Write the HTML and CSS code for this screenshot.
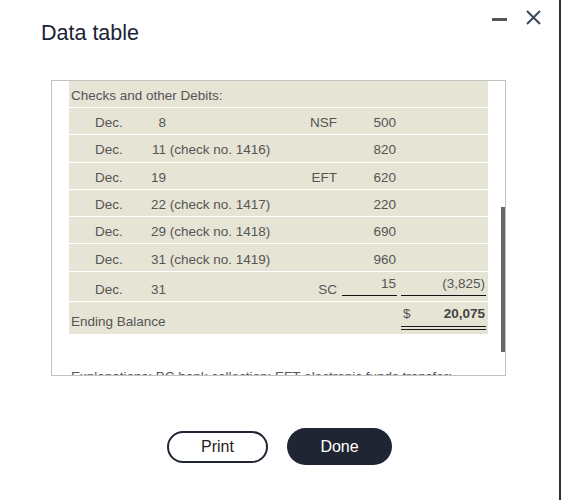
FILE: index.html
```html
<!DOCTYPE html>
<html lang="en">
<head>
<meta charset="utf-8">
<title>Data table</title>
<link rel="stylesheet" href="styles.css">
</head>
<body>
<div class="page">
  <div class="dialog">
    <div class="head">
      <h1 class="title">Data table</h1>
      <div class="win-icons">
        <svg class="ic-min" width="15" height="15" viewBox="0 0 15 15"><rect x="0" y="8" width="15" height="3" fill="#555"/></svg>
        <svg class="ic-close" width="15" height="15" viewBox="0 0 15 15"><path d="M1 1L14 14M14 1L1 14" stroke="#3b4858" stroke-width="2" fill="none"/></svg>
      </div>
    </div>
    <div class="box">
      <div class="scroll">
        <div class="ledger">
          <div class="row row-head"><span class="c-head">Checks and other Debits:</span></div>
          <div class="row"><span class="c-date">Dec.</span><span class="c-desc"><span class="day">8</span></span><span class="c-label">NSF</span><span class="c-amt">500</span><span class="c-total"></span></div>
          <div class="row"><span class="c-date">Dec.</span><span class="c-desc"><span class="day">11</span> (check no. 1416)</span><span class="c-label"></span><span class="c-amt">820</span><span class="c-total"></span></div>
          <div class="row"><span class="c-date">Dec.</span><span class="c-desc"><span class="day">19</span></span><span class="c-label">EFT</span><span class="c-amt">620</span><span class="c-total"></span></div>
          <div class="row"><span class="c-date">Dec.</span><span class="c-desc"><span class="day">22</span> (check no. 1417)</span><span class="c-label"></span><span class="c-amt">220</span><span class="c-total"></span></div>
          <div class="row"><span class="c-date">Dec.</span><span class="c-desc"><span class="day">29</span> (check no. 1418)</span><span class="c-label"></span><span class="c-amt">690</span><span class="c-total"></span></div>
          <div class="row"><span class="c-date">Dec.</span><span class="c-desc"><span class="day">31</span> (check no. 1419)</span><span class="c-label"></span><span class="c-amt">960</span><span class="c-total"></span></div>
          <div class="row row-sc"><span class="c-date">Dec.</span><span class="c-desc"><span class="day">31</span></span><span class="c-label">SC</span><span class="c-amt underline">15</span><span class="c-total underline">(3,825)</span></div>
          <div class="row row-end"><span class="c-endlabel">Ending Balance</span><span class="c-total c-grand"><span>$</span><span class="grand-num">20,075</span></span></div>
        </div>
        <p class="note">Explanations: BC bank collection; EFT electronic funds transfer;</p>
      </div>
      <div class="thumb"></div>
    </div>
    <div class="actions">
      <button class="btn btn-print">Print</button>
      <button class="btn btn-done">Done</button>
    </div>
  </div>
  <div class="edge"></div>
</div>
</body>
</html>
```
FILE: styles.css
```css
html, body {
  margin: 0;
  padding: 0;
  background: #fff;
}
body {
  font-family: "Liberation Sans", Arial, sans-serif;
}
.page {
  display: flex;
  width: 561px;
  height: 500px;
  overflow: hidden;
}
.dialog {
  flex: 1;
  background: #fff;
  display: flex;
  flex-direction: column;
}
.edge {
  width: 2px;
  background: #2e2e2e;
}
.head {
  display: flex;
  align-items: flex-start;
  justify-content: space-between;
}
.title {
  margin: 0;
  padding: 21px 0 0 41px;
  font-size: 21.5px;
  line-height: 24px;
  font-weight: normal;
  color: #1b2236;
}
.win-icons {
  display: flex;
  align-items: flex-start;
  gap: 19px;
  padding: 10px 18px 0 0;
}
.win-icons svg {
  display: block;
}
.box {
  position: relative;
  box-sizing: border-box;
  margin: 35px 0 0 51px;
  width: 455px;
  height: 296px;
  border: 1px solid #c2c2c2;
  overflow: hidden;
}
.scroll {
  padding-left: 17px;
}
.ledger {
  width: 419px;
  display: flex;
  flex-direction: column;
  gap: 1px;
  background: #fff;
  font-size: 13.5px;
  line-height: 16px;
  color: #555;
}
.row {
  display: grid;
  grid-template-columns: 82px 149px 42px 55px 89px;
  align-items: center;
  box-sizing: border-box;
  height: 26.3px;
  padding-top: 4px;
  background: #e6e4d4;
  white-space: nowrap;
}
.row-head {
  grid-template-columns: 1fr;
  height: 26px;
  padding-left: 2px;
}
.c-date {
  padding-left: 26px;
}
.day {
  display: inline-block;
  width: 15px;
  text-align: right;
}
.c-label {
  text-align: right;
  padding-right: 5px;
}
.c-amt {
  text-align: right;
  padding-right: 1px;
}
.c-total {
  margin-left: 4px;
  text-align: right;
  padding-right: 1px;
}
.row-sc {
  height: 29.7px;
  padding-top: 0;
  align-items: end;
}
.row-sc .c-date,
.row-sc .c-desc,
.row-sc .c-label {
  margin-bottom: 3.4px;
}
.underline {
  border-bottom: 1px solid #111;
  padding-bottom: 2.4px;
  margin-bottom: 5.7px;
}
.row-end {
  height: 31.6px;
  padding-top: 0;
  align-items: end;
}
.c-endlabel {
  grid-column: 1 / span 4;
  padding-left: 2px;
  margin-bottom: 4.3px;
}
.c-grand {
  display: flex;
  justify-content: space-between;
  padding-left: 2px;
  padding-bottom: 3.4px;
  margin-bottom: 4.3px;
  border-bottom: 4px double #1a1a1a;
}
.grand-num {
  font-weight: bold;
  color: #444;
}
.note {
  margin: 35px 0 0 0;
  padding-left: 2px;
  font-size: 13.5px;
  line-height: 16px;
  color: #555;
  white-space: nowrap;
}
.thumb {
  position: absolute;
  right: 0;
  top: 126px;
  width: 4px;
  height: 145px;
  background: #686868;
}
.actions {
  display: flex;
  justify-content: center;
  align-items: center;
  gap: 19px;
  margin-top: 52px;
}
.btn {
  font-family: "Liberation Sans", Arial, sans-serif;
  font-size: 16px;
  line-height: 18px;
  box-sizing: border-box;
  padding: 0;
  cursor: pointer;
}
.btn-print {
  width: 101px;
  height: 32px;
  border: 2px solid #1f2532;
  border-radius: 16px;
  background: #fff;
  color: #222;
}
.btn-done {
  width: 105px;
  height: 37px;
  border: none;
  border-radius: 18.5px;
  background: #1f2533;
  color: #fff;
}
```
